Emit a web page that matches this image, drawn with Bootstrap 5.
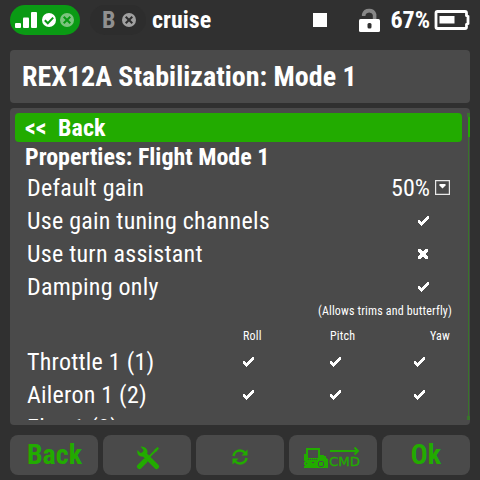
<!DOCTYPE html>
<html lang="en">
<head>
<meta charset="utf-8">
<meta name="viewport" content="width=device-width, initial-scale=1">
<title>REX12A Stabilization</title>
<link href="https://cdn.jsdelivr.net/npm/bootstrap@5.3.0/dist/css/bootstrap.min.css" rel="stylesheet">
<style>
body{width:480px;height:480px;background:#303030;color:#fff;font-family:"Roboto Condensed",Roboto,"Liberation Sans",sans-serif;font-stretch:75%;overflow:hidden}
svg{display:block;flex:none}
.topbar{height:40px;padding:0 10px}
.link-pill{width:70px;height:30px;background:#0a9a14;border-radius:15px}
.bind-pill{width:56px;height:30px;margin-left:10px;padding-left:12px;background:#2d2d2d;border-radius:15px;color:#909090;gap:7px}
.model-name{margin-left:6px}
.panel{background:#4a4a4a;border-radius:4px;margin:0 10px}
.title-panel{height:53px;margin-top:10px;padding-left:12px;font-size:28px}
.list-panel{height:317px;margin-top:5px;padding:5px 0 5px 5px}
.list-view{width:447px;overflow:hidden}
.back-row{height:29px;background:#22ab00;border-radius:4px;padding-left:10px;word-spacing:.3px}
.head-row{height:29px;padding:1px 0 0 10px}
.opt{height:33px;flex:none;padding:0 12px;font-size:24px;letter-spacing:.24px}
.opt-check{padding-right:33px}
.pix{margin-top:1px}
.note{height:16px;padding-right:10px}
.col-heads{height:26px;padding:8px 12px 0;line-height:1}
.fs-12{font-size:12px;letter-spacing:.17px}
.fs-24{font-size:24px}
.axes{display:grid;grid-template-columns:216px 87px 84px 1fr;align-items:center}
.gain-value{gap:5px;letter-spacing:0}
.track{margin-left:5px}
.softkeys{margin:10px 10px 0;gap:5px}
.key{height:40px;width:88px;padding:0 0 1px;border:0;border-radius:8px;background:#4a4a4a;color:#22ab00;font-size:28px;line-height:1}
.ico-tools{margin:7px 0 0 2px}
.ico-sync{margin-top:5px}
.ico-cmd{margin:7px 2px 0 0}
.key-back{padding-left:1px}
.s{display:inline-block;white-space:pre;line-height:1}
</style>
</head>
<body>
<svg width="0" height="0" class="d-none">
  <symbol id="tick" viewBox="0 0 11 10"><path d="M0 4h2v1h1v1h1V5h1V4h1V3h1V2h1V1h1V0h2v3h-1v1H9v1H8v1H7v1H6v1H5v1H4v1H3V9H2V8H1V7H0z" fill="#fff"/></symbol>
  <symbol id="cross" viewBox="0 0 10 10"><path d="M0 0h3v1h1v1h2V1h1V0h3v3H9v1H8v2h1v1h1v3H7V9H6V8H4v1H3v1H0V7h1V6h1V4H1V3H0z" fill="#fff"/></symbol>
</svg>

<header class="topbar d-flex align-items-center">
  <div class="link-pill">
    <svg width="70" height="30" viewBox="0 0 70 30">
      <g fill="#fff"><rect x="5" y="18" width="6" height="5" rx="1"/><rect x="13" y="12.500" width="6" height="10.500" rx="1"/><rect x="21" y="7" width="6" height="16" rx="1"/><circle cx="39" cy="15" r="7"/></g>
      <path d="M34.800 15.200l3 3 5.400-5.600" fill="none" stroke="#0a9a14" stroke-width="2"/>
      <circle cx="57" cy="15" r="7" fill="#7cc47e"/>
      <path d="M53.700 11.700l6.600 6.600m0-6.600l-6.600 6.600" stroke="#0a9a14" stroke-width="2"/>
    </svg>
  </div>
  <div class="bind-pill d-flex align-items-center fs-24 fw-bold">
    <span class="s">B</span>
    <svg width="14" height="14" viewBox="0 0 14 14"><circle cx="7" cy="7" r="7" fill="#a0a0a0"/><path d="M3.700 3.700l6.600 6.600m0-6.600l-6.600 6.600" stroke="#2d2d2d" stroke-width="2"/></svg>
  </div>
  <span class="s model-name fs-24 fw-bold">cruise</span>
  <div class="d-flex align-items-center ms-auto">
    <svg width="77" height="40" viewBox="313 0 77 40">
      <path d="M313 13h14v14h-14z" fill="#fff"/>
      <path d="M363.700 16v-1.500a5.600 5 0 0 1 10.900 0V20" fill="none" stroke="#878787" stroke-width="3.600"/>
      <rect x="359" y="19" width="21" height="13" rx="1.500" fill="#fff"/><rect x="367.500" y="23" width="4" height="5.500" rx="1.500" fill="#303030"/>
    </svg>
    <span class="s fs-24 fw-bold">67%</span>
    <svg class="ms-1" width="36" height="20" viewBox="-.5 0 36 20">
      <path d="M3 1.500h27.500q1.500 0 1.500 1.500v2.500l1.500 1v7l-1.500 1v2.500q0 1.500-1.500 1.500H3q-1.500 0-1.500-1.500V3q0-1.500 1.500-1.500z" fill="none" stroke="#fff" stroke-width="2.800"/>
      <path d="M5 6h15v7.500H5z" fill="#fff"/>
    </svg>
  </div>
</header>

<div class="panel title-panel d-flex align-items-center fw-bold"><span class="s">REX12A Stabilization: Mode 1</span></div>

<main class="panel list-panel d-flex">
  <div class="list-view">
    <div class="back-row fs-24 fw-bold d-flex align-items-center"><span class="s">&lt;&lt;  Back</span></div>
    <div class="head-row fs-24 fw-bold d-flex align-items-center"><span class="s">Properties: Flight Mode 1</span></div>
    <div class="opt d-flex align-items-center justify-content-between"><span class="s">Default gain</span>
      <span class="gain-value d-flex align-items-center"><span class="s">50%</span>
        <svg width="15" height="15" viewBox="0 0 15 15"><path d="M.600.600h13.800v13.800H.600z" fill="none" stroke="#e8e8e8" stroke-width="1.200"/><path d="M4.500 4h6v1.500L7.500 8.500l-3-3z" fill="#fff"/></svg></span></div>
    <div class="opt opt-check d-flex align-items-center justify-content-between"><span class="s">Use gain tuning channels</span><svg class="pix" width="11" height="10"><use href="#tick"/></svg></div>
    <div class="opt opt-check d-flex align-items-center justify-content-between"><span class="s">Use turn assistant</span><svg class="pix" width="11" height="10" viewBox="0 0 11 10"><use href="#cross" width="10" height="10"/></svg></div>
    <div class="opt opt-check d-flex align-items-center justify-content-between"><span class="s">Damping only</span><svg class="pix" width="11" height="10"><use href="#tick"/></svg></div>
    <div class="note fs-12 d-flex align-items-center justify-content-end"><span class="s">(Allows trims and butterfly)</span></div>
    <div class="col-heads axes fs-12"><span></span><span>Roll</span><span>Pitch</span><span class="text-end">Yaw</span></div>
    <div class="opt axes"><span class="s">Throttle 1 (1)</span><svg class="pix" width="11" height="10"><use href="#tick"/></svg><svg class="pix" width="11" height="10"><use href="#tick"/></svg><svg class="pix" width="11" height="10"><use href="#tick"/></svg></div>
    <div class="opt axes"><span class="s">Aileron 1 (2)</span><svg class="pix" width="11" height="10"><use href="#tick"/></svg><svg class="pix" width="11" height="10"><use href="#tick"/></svg><svg class="pix" width="11" height="10"><use href="#tick"/></svg></div>
    <div class="opt axes"><span class="s">Elev 1 (3)</span></div>
  </div>
  <svg class="track" width="3" height="307" viewBox="0 0 3 307"><path d="M0 0h3v4H0zM1 4h1v300H1zM0 303h3v4H0z" fill="#38752a"/><path d="M1 4h2v20H1z" fill="#22ab00"/></svg>
</main>

<footer class="softkeys d-flex">
  <button class="key key-back fw-bold">Back</button>
  <button class="key d-flex align-items-center justify-content-center">
    <svg class="ico-tools" width="24" height="24" viewBox="0 0 24 24">
      <g fill="none" stroke="#22ab00"><path d="M8 8l12.500 12.500" stroke-width="5" stroke-linecap="round"/><path d="M13 11l6.500-6.500" stroke-width="1.800"/><path d="M3.500 20.500L9 15" stroke-width="5" stroke-linecap="round"/></g>
      <path d="M18 4l3.500-3L23 2.500 20 6z" fill="#22ab00"/>
      <path d="M4.500.500l3 3.500-.500 2.500-2.500.500-3-3C.500 8 3 11 7 10.500l3-1 1.500-3C12 3 8.500 0 4.500.500z" fill="#22ab00"/>
    </svg>
  </button>
  <button class="key d-flex align-items-center justify-content-center">
    <svg class="ico-sync" width="16" height="16" viewBox="0 0 16 16"><g fill="none" stroke="#22ab00" stroke-width="2.600"><path d="M1.500 7C2 3.500 5 1.500 8 1.500c2 0 3.800.800 5.200 2.500M14.500 9c-.500 3.500-3.500 5.500-6.500 5.500-2 0-3.800-.800-5.200-2.500"/></g><path d="M15.500.500v6h-6zM.500 15.500v-6h6z" fill="#22ab00"/></svg>
  </button>
  <button class="key d-flex align-items-center justify-content-center">
    <svg class="ico-cmd" width="58" height="22" viewBox="303 447 58 22" shape-rendering="crispEdges">
      <g fill="#22ab00">
        <path d="M306 448h14v2h-14zM306 450h2v8h-2zM318 450h2v8h-2zM304 454h2v4h-2zM320 455h4v3h-4zM324 456h2v2h-2zM304 458h23v1h-23zM304 459h24v9h-24z"/>
        <path d="M330 450h28v2h-28z"/>
      </g>
      <path d="M308 459h1v1h-1zm2 0h1v1h-1zm2 0h1v1h-1zm2 0h1v1h-1zm2 0h1v1h-1zM304 461h1v1h-1zm0 4h1v1h-1zm2-2h1v1h-1zM312 462h2v1h-2zM319 461h4v1h-4zM318 462h1v4h-1zM323 462h1v4h-1zM319 466h4v1h-4z" fill="#4a4a4a"/>
      <path d="M354.500 447.500l3.500 3.500-3.500 3.500" fill="none" stroke="#22ab00" stroke-width="2" shape-rendering="auto"/>
      <text x="329" y="466" font-family="DejaVu Sans,sans-serif" font-size="12.500" fill="#22ab00" stroke="#22ab00" stroke-width=".3" textLength="31" lengthAdjust="spacingAndGlyphs">CMD</text>
    </svg>
  </button>
  <button class="key fw-bold">Ok</button>
</footer>
<script src="https://cdn.jsdelivr.net/npm/bootstrap@5.3.0/dist/js/bootstrap.bundle.min.js"></script>
</body>
</html>
